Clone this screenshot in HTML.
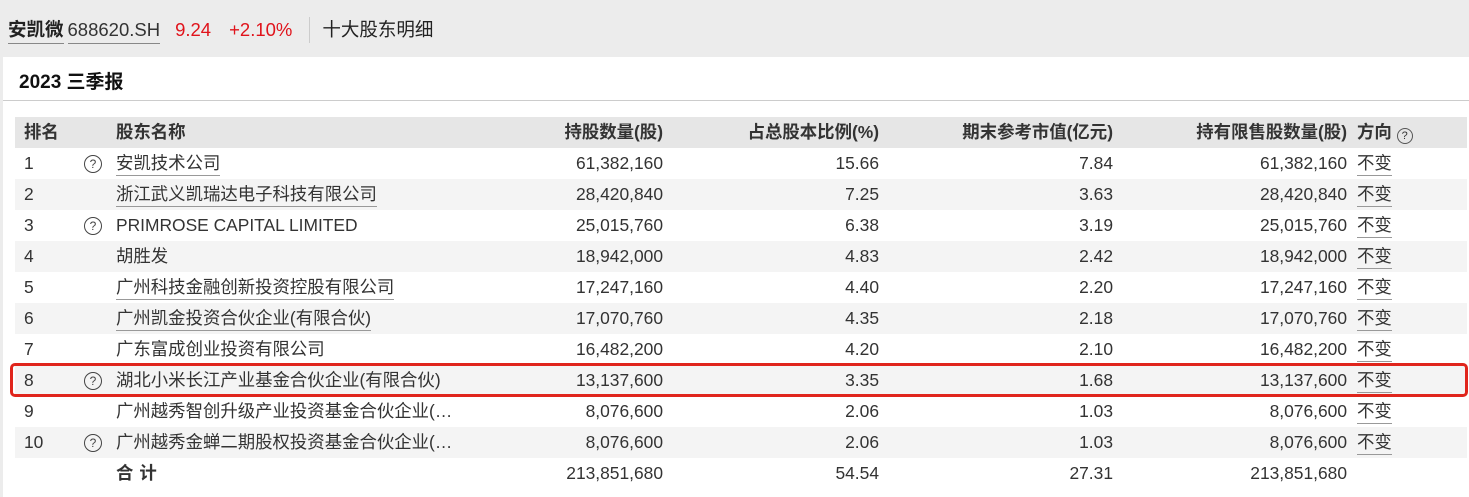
<!DOCTYPE html>
<html><head><meta charset="utf-8"><style>
*{margin:0;padding:0;box-sizing:border-box}
body{width:1469px;height:488px;background:#ececec;font-family:"Liberation Sans","Noto Sans CJK SC",sans-serif;color:#333;position:relative;overflow:hidden}
.top{position:absolute;left:8px;top:17px;font-size:18.5px;line-height:26px;white-space:nowrap}
.top span{display:inline-block;vertical-align:top}
.card{position:absolute;left:3px;top:57px;width:1470px;height:440px;background:#fff}
.title{position:absolute;left:16px;top:10px;font-size:19px;font-weight:bold;color:#111}
.hr{position:absolute;left:0;right:0;top:43px;height:1px;background:#ccc}
.row{position:absolute;left:15px;width:1452px;height:31px;font-size:17.4px;line-height:31px}
.row.s{background:#f4f4f4}
.row.h{background:#e6e6e6;font-weight:bold;color:#333}
.c{position:absolute;top:0;white-space:nowrap}
.r{text-align:right}
.u{border-bottom:1px solid #999;line-height:24px;top:3px}
.q{position:absolute;left:69px;top:7px;width:18px;height:18px;border:1px solid #444;border-radius:50%;font-size:12px;line-height:16px;text-align:center;color:#444;font-weight:normal}
.box{position:absolute;left:10px;top:363px;width:1458px;height:34px;border:3px solid #e0251c;border-radius:5px}
</style></head><body>
<div class="top"><span style="font-weight:bold;border-bottom:1px solid #888;color:#222">安凯微</span><span style="border-bottom:1px solid #888;color:#333;margin-left:4px">688620.SH</span><span style="color:#e0131b;margin-left:15px">9.24</span><span style="color:#e0131b;margin-left:18px">+2.10%</span><span style="width:1px;height:26px;background:#ccc;margin:0 12px 0 17px"></span><span style="color:#222">十大股东明细</span></div>
<div class="card"><div class="title">2023 三季报</div><div class="hr"></div></div>
<div class="row h" style="top:117px"><div class="c" style="left:9px">排名</div><div class="c" style="left:101px">股东名称</div><div class="c r" style="right:804px">持股数量(股)</div><div class="c r" style="right:588px">占总股本比例(%)</div><div class="c r" style="right:354px">期末参考市值(亿元)</div><div class="c r" style="right:120px">持有限售股数量(股)</div><div class="c" style="left:1342px">方向 <span style="display:inline-block;width:16px;height:16px;border:1px solid #555;border-radius:50%;font-size:11px;line-height:14px;text-align:center;font-weight:normal;vertical-align:-1px">?</span></div></div>

<div class="row" style="top:148px"><div class="c" style="left:9px">1</div><div class="q">?</div><div class="c u" style="left:101px">安凯技术公司</div><div class="c r" style="right:804px">61,382,160</div><div class="c r" style="right:588px">15.66</div><div class="c r" style="right:354px">7.84</div><div class="c r" style="right:120px">61,382,160</div><div class="c u" style="left:1342px">不变</div></div>
<div class="row s" style="top:179px"><div class="c" style="left:9px">2</div><div class="c u" style="left:101px">浙江武义凯瑞达电子科技有限公司</div><div class="c r" style="right:804px">28,420,840</div><div class="c r" style="right:588px">7.25</div><div class="c r" style="right:354px">3.63</div><div class="c r" style="right:120px">28,420,840</div><div class="c u" style="left:1342px">不变</div></div>
<div class="row" style="top:210px"><div class="c" style="left:9px">3</div><div class="q">?</div><div class="c" style="left:101px">PRIMROSE CAPITAL LIMITED</div><div class="c r" style="right:804px">25,015,760</div><div class="c r" style="right:588px">6.38</div><div class="c r" style="right:354px">3.19</div><div class="c r" style="right:120px">25,015,760</div><div class="c u" style="left:1342px">不变</div></div>
<div class="row s" style="top:241px"><div class="c" style="left:9px">4</div><div class="c" style="left:101px">胡胜发</div><div class="c r" style="right:804px">18,942,000</div><div class="c r" style="right:588px">4.83</div><div class="c r" style="right:354px">2.42</div><div class="c r" style="right:120px">18,942,000</div><div class="c u" style="left:1342px">不变</div></div>
<div class="row" style="top:272px"><div class="c" style="left:9px">5</div><div class="c u" style="left:101px">广州科技金融创新投资控股有限公司</div><div class="c r" style="right:804px">17,247,160</div><div class="c r" style="right:588px">4.40</div><div class="c r" style="right:354px">2.20</div><div class="c r" style="right:120px">17,247,160</div><div class="c u" style="left:1342px">不变</div></div>
<div class="row s" style="top:303px"><div class="c" style="left:9px">6</div><div class="c u" style="left:101px">广州凯金投资合伙企业(有限合伙)</div><div class="c r" style="right:804px">17,070,760</div><div class="c r" style="right:588px">4.35</div><div class="c r" style="right:354px">2.18</div><div class="c r" style="right:120px">17,070,760</div><div class="c u" style="left:1342px">不变</div></div>
<div class="row" style="top:334px"><div class="c" style="left:9px">7</div><div class="c" style="left:101px">广东富成创业投资有限公司</div><div class="c r" style="right:804px">16,482,200</div><div class="c r" style="right:588px">4.20</div><div class="c r" style="right:354px">2.10</div><div class="c r" style="right:120px">16,482,200</div><div class="c u" style="left:1342px">不变</div></div>
<div class="row s" style="top:365px"><div class="c" style="left:9px">8</div><div class="q">?</div><div class="c" style="left:101px">湖北小米长江产业基金合伙企业(有限合伙)</div><div class="c r" style="right:804px">13,137,600</div><div class="c r" style="right:588px">3.35</div><div class="c r" style="right:354px">1.68</div><div class="c r" style="right:120px">13,137,600</div><div class="c u" style="left:1342px">不变</div></div>
<div class="row" style="top:396px"><div class="c" style="left:9px">9</div><div class="c" style="left:101px">广州越秀智创升级产业投资基金合伙企业(…</div><div class="c r" style="right:804px">8,076,600</div><div class="c r" style="right:588px">2.06</div><div class="c r" style="right:354px">1.03</div><div class="c r" style="right:120px">8,076,600</div><div class="c u" style="left:1342px">不变</div></div>
<div class="row s" style="top:427px"><div class="c" style="left:9px">10</div><div class="q">?</div><div class="c" style="left:101px">广州越秀金蝉二期股权投资基金合伙企业(…</div><div class="c r" style="right:804px">8,076,600</div><div class="c r" style="right:588px">2.06</div><div class="c r" style="right:354px">1.03</div><div class="c r" style="right:120px">8,076,600</div><div class="c u" style="left:1342px">不变</div></div>
<div class="row" style="top:458px"><div class="c" style="left:101px;font-weight:bold;letter-spacing:6px">合计</div><div class="c r" style="right:804px">213,851,680</div><div class="c r" style="right:588px">54.54</div><div class="c r" style="right:354px">27.31</div><div class="c r" style="right:120px">213,851,680</div></div>
<div class="box"></div>
</body></html>
